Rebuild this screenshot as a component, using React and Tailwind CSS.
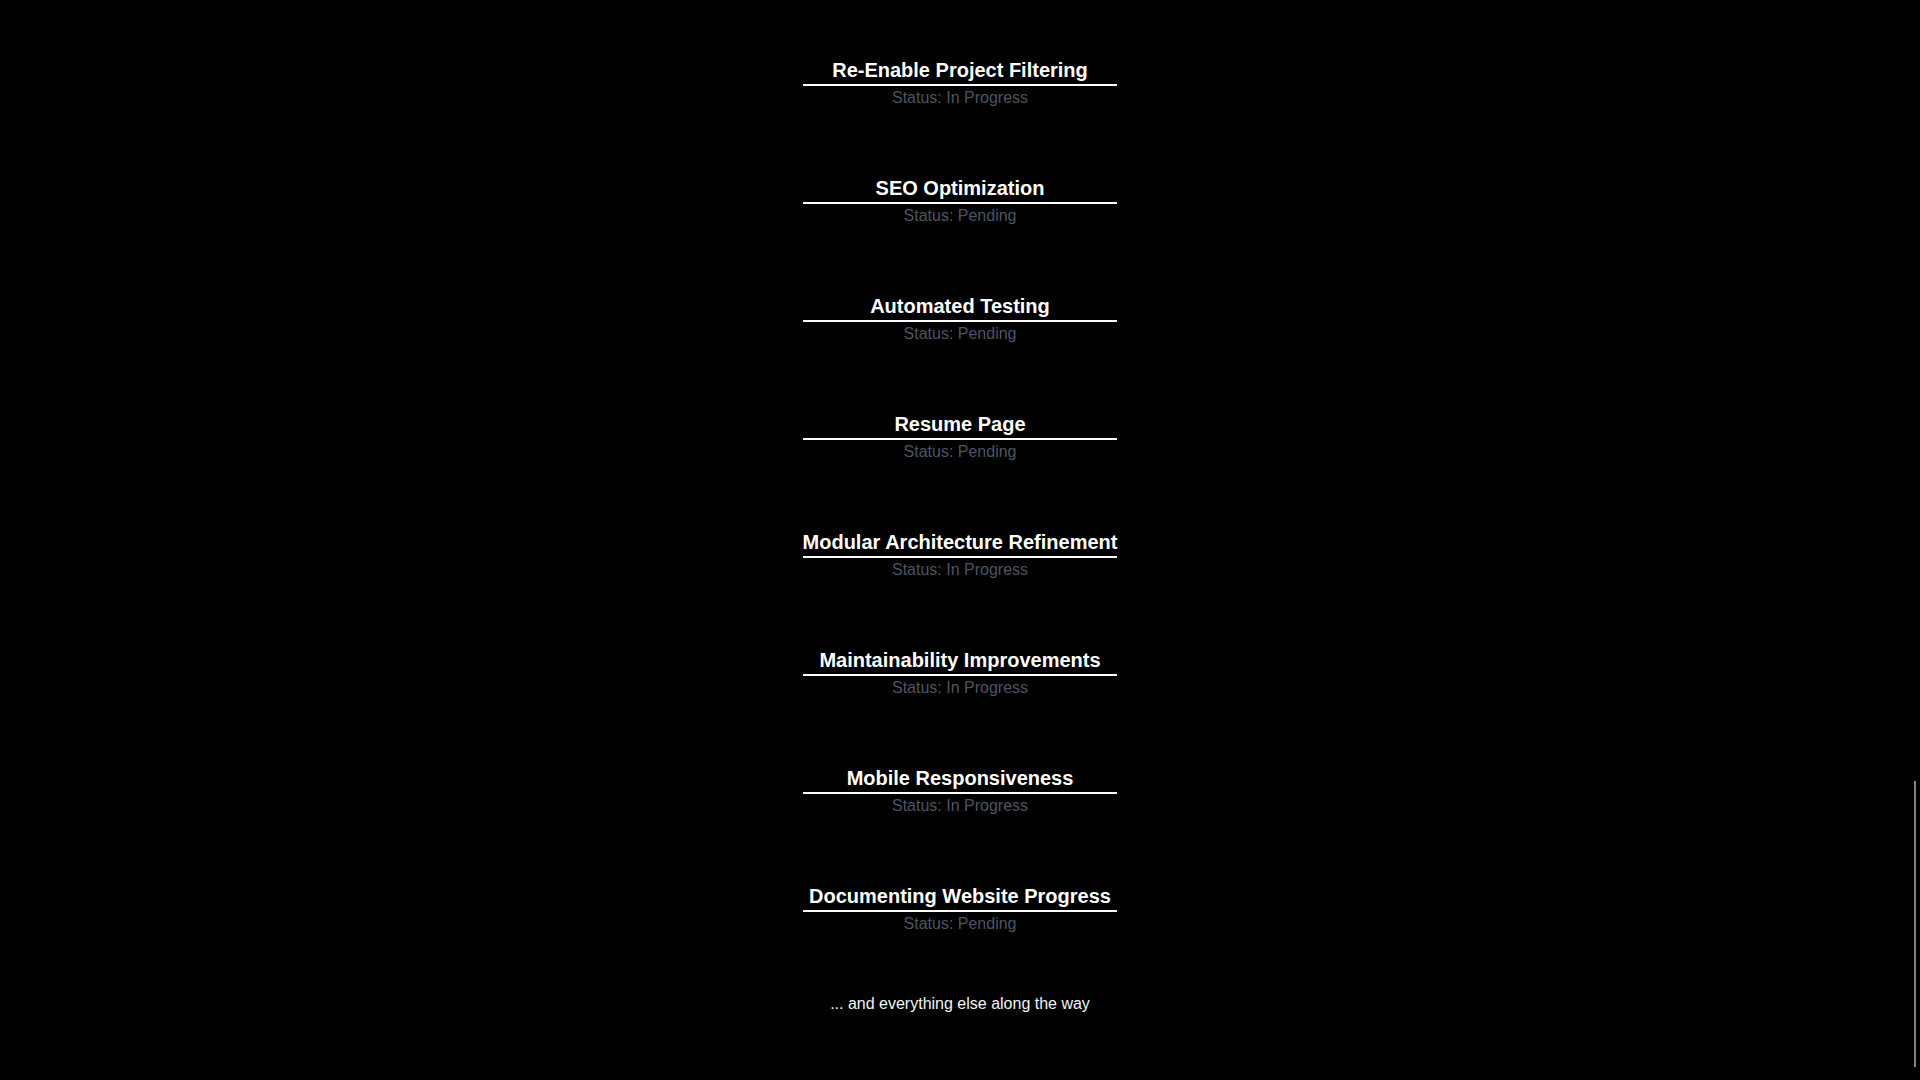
import React from "react";

const items = [
  ["Re-Enable Project Filtering", "In Progress"],
  ["SEO Optimization", "Pending"],
  ["Automated Testing", "Pending"],
  ["Resume Page", "Pending"],
  ["Modular Architecture Refinement", "In Progress"],
  ["Maintainability Improvements", "In Progress"],
  ["Mobile Responsiveness", "In Progress"],
  ["Documenting Website Progress", "Pending"],
];

export default function App() {
  return (
    <div
      className="min-h-screen w-full bg-black text-white relative overflow-hidden"
      style={{ fontFamily: '"Liberation Sans", Arial, sans-serif' }}
    >
      <div className="flex flex-col items-center pt-14">
        <div className="w-fit flex flex-col gap-16">
          {items.map(([title, status]) => (
            <div key={title} className="flex flex-col">
              <h3 className="text-xl leading-7 font-bold text-center border-b-2 border-white whitespace-nowrap">
                {title}
              </h3>
              <p className="text-base leading-6 text-center text-[#4b5563]">
                Status: {status}
              </p>
            </div>
          ))}
        </div>
        <p className="mt-14 text-base leading-6 text-[#f3f4f6]">
          ... and everything else along the way
        </p>
      </div>
      <div className="absolute right-[4px] top-[781px] h-[286px] w-[2px] bg-[#808080]" />
    </div>
  );
}
